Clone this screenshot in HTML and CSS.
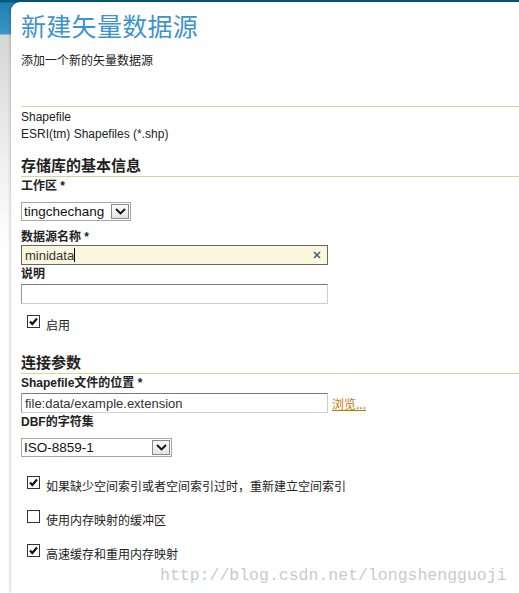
FILE: index.html
```html
<!DOCTYPE html>
<html lang="zh">
<head>
<meta charset="utf-8">
<title>新建矢量数据源</title>
<link rel="stylesheet" href="styles.css">
</head>
<body>
<div class="page">
  <div class="panel">
    <h1 class="title">新建矢量数据源</h1>
    <p class="subtitle">添加一个新的矢量数据源</p>
    <div class="type">
      <div>Shapefile</div>
      <div>ESRI(tm) Shapefiles (*.shp)</div>
    </div>

    <h2 class="section">存储库的基本信息</h2>
    <div class="label">工作区 *</div>
    <div class="select select-ws">
      <span class="select-text">tingchechang</span>
      <span class="select-btn"><svg width="11" height="7" viewBox="0 0 11 7"><path d="M1 1 L5.5 5.5 L10 1" fill="none" stroke="#111" stroke-width="1.8"/></svg></span>
    </div>

    <div class="label label-gap">数据源名称 *</div>
    <div class="input input-active">
      <span class="input-text">minidata</span><span class="caret"></span>
      <svg class="clear" width="8" height="8" viewBox="0 0 8 8"><path d="M1 1 L7 7 M7 1 L1 7" stroke="#4a6278" stroke-width="1.6"/></svg>
    </div>
    <div class="label">说明</div>
    <div class="input input-plain input-desc"></div>

    <div class="check-row check-enable">
      <span class="box"><svg width="11" height="11" viewBox="0 0 11 11"><path d="M2 5.5 L4.3 8 L9 2.5" fill="none" stroke="#111" stroke-width="2.2"/></svg></span>
      <span class="check-label">启用</span>
    </div>

    <h2 class="section section-conn">连接参数</h2>
    <div class="label">Shapefile文件的位置 *</div>
    <div class="file-row">
      <div class="input input-plain"><span class="input-text">file:data/example.extension</span></div>
      <a class="browse" href="#">浏览...</a>
    </div>
    <div class="label">DBF的字符集</div>
    <div class="select select-cs">
      <span class="select-text">ISO-8859-1</span>
      <span class="select-btn"><svg width="11" height="7" viewBox="0 0 11 7"><path d="M1 1 L5.5 5.5 L10 1" fill="none" stroke="#111" stroke-width="1.8"/></svg></span>
    </div>

    <div class="check-row check-first">
      <span class="box"><svg width="11" height="11" viewBox="0 0 11 11"><path d="M2 5.5 L4.3 8 L9 2.5" fill="none" stroke="#111" stroke-width="2.2"/></svg></span>
      <span class="check-label">如果缺少空间索引或者空间索引过时，重新建立空间索引</span>
    </div>
    <div class="check-row">
      <span class="box"></span>
      <span class="check-label">使用内存映射的缓冲区</span>
    </div>
    <div class="check-row">
      <span class="box"><svg width="11" height="11" viewBox="0 0 11 11"><path d="M2 5.5 L4.3 8 L9 2.5" fill="none" stroke="#111" stroke-width="2.2"/></svg></span>
      <span class="check-label">高速缓存和重用内存映射</span>
    </div>
    <div class="watermark">http://blog.csdn.net/longshengguoji</div>
  </div>
</div>
</body>
</html>
```
FILE: styles.css
```css
html, body {
  margin: 0;
  padding: 0;
  background: #fff;
}
body {
  font-family: "Liberation Sans", "Noto Sans CJK SC", sans-serif;
  font-size: 12px;
  color: #222;
}
.page {
  width: 519px;
  height: 593px;
  overflow: hidden;
  padding: 2px 0 0 11px;
  box-sizing: border-box;
  background:
    linear-gradient(to bottom, #005a78 0, #005a78 2px, #1f7fae 3px, #3a97c8 34px, #d6d6d6 35px, #e8e8e8 120px, #ffffff 250px);
}
.panel {
  background: #fff;
  border-top-left-radius: 9px;
  height: 100%;
  padding: 8px 0 0 10px;
  box-sizing: border-box;
  box-shadow: -1px 0 3px rgba(0,0,0,0.18);
}
.title {
  margin: 0;
  font-family: "Noto Sans CJK SC", sans-serif;
  font-weight: 400;
  font-size: 25px;
  line-height: 30px;
  color: #3d93cf;
  letter-spacing: 0.3px;
}
.subtitle {
  margin: 12px 0 0;
  line-height: 16px;
  padding-bottom: 38px;
  border-bottom: 1px solid #c4df98;
  font-family: "Noto Sans CJK SC", sans-serif;
}
.type {
  margin-top: 2px;
  line-height: 17px;
}
.section {
  margin: 13px 0 0;
  font-family: "Noto Sans CJK SC", sans-serif;
  font-size: 15px;
  font-weight: 700;
  line-height: 18px;
  padding-bottom: 2px;
  border-bottom: 1px solid #c4df98;
  color: #222;
}
.section-conn {
  margin-top: 18px;
}
.label {
  margin-top: 1px;
  font-weight: 700;
  line-height: 16px;
  font-size: 12px;
}
.label-gap {
  margin-top: 8px;
}
.select {
  margin-top: 8px;
  height: 19px;
  box-sizing: border-box;
  border: 1px solid #a7a7a7;
  display: flex;
  align-items: center;
  justify-content: space-between;
  padding: 0 1px 0 2px;
  background: #fff;
}
.select-ws { width: 110px; }
.select-cs { width: 151px; }
.select-text {
  font-size: 13.5px;
  color: #111;
  line-height: 17px;
}
.select-btn {
  width: 18px;
  height: 15px;
  box-sizing: border-box;
  border: 1px solid #8a8a8a;
  background: linear-gradient(#fbfbfb, #e4e4e4);
  display: flex;
  align-items: center;
  justify-content: center;
}
.input {
  width: 307px;
  height: 20px;
  box-sizing: border-box;
  border: 1px solid #9b9b9b;
  border-right-color: #cfcfcf;
  border-bottom-color: #cfcfcf;
  border-top-color: #7a7a7a;
  display: flex;
  align-items: center;
  padding-left: 3px;
  position: relative;
  background: #fff;
}
.input-active {
  background: #fbf7dd;
  border: 1px solid #666;
}
.input-desc {
  margin-top: 2px;
}
.input-text {
  font-size: 13px;
  color: #333;
}
.caret {
  display: inline-block;
  width: 1px;
  height: 14px;
  background: #000;
}
.clear {
  position: absolute;
  right: 6px;
  top: 5px;
}
.check-row {
  display: flex;
  align-items: flex-start;
  height: 20px;
  margin-top: 14px;
  padding-left: 6px;
}
.check-enable { margin-top: 11px; }
.check-first { margin-top: 19px; }
.box {
  width: 13px;
  height: 13px;
  box-sizing: border-box;
  border: 1px solid #333;
  background: #fff;
  display: flex;
  align-items: center;
  justify-content: center;
}
.check-label {
  margin-left: 6px;
  line-height: 20px;
  margin-top: 0;
  font-family: "Noto Sans CJK SC", sans-serif;
  font-size: 12px;
  color: #222;
}
.file-row {
  margin-top: 2px;
  display: flex;
  align-items: center;
}
.browse {
  margin-left: 4px;
  color: #c67300;
  text-decoration: underline;
  font-family: "Noto Sans CJK SC", sans-serif;
  font-size: 12px;
}
.watermark {
  margin-top: 2px;
  padding-left: 139px;
  font-family: "Liberation Mono", monospace;
  font-size: 16.5px;
  line-height: 20px;
  color: #cacaca;
  white-space: nowrap;
}
```
